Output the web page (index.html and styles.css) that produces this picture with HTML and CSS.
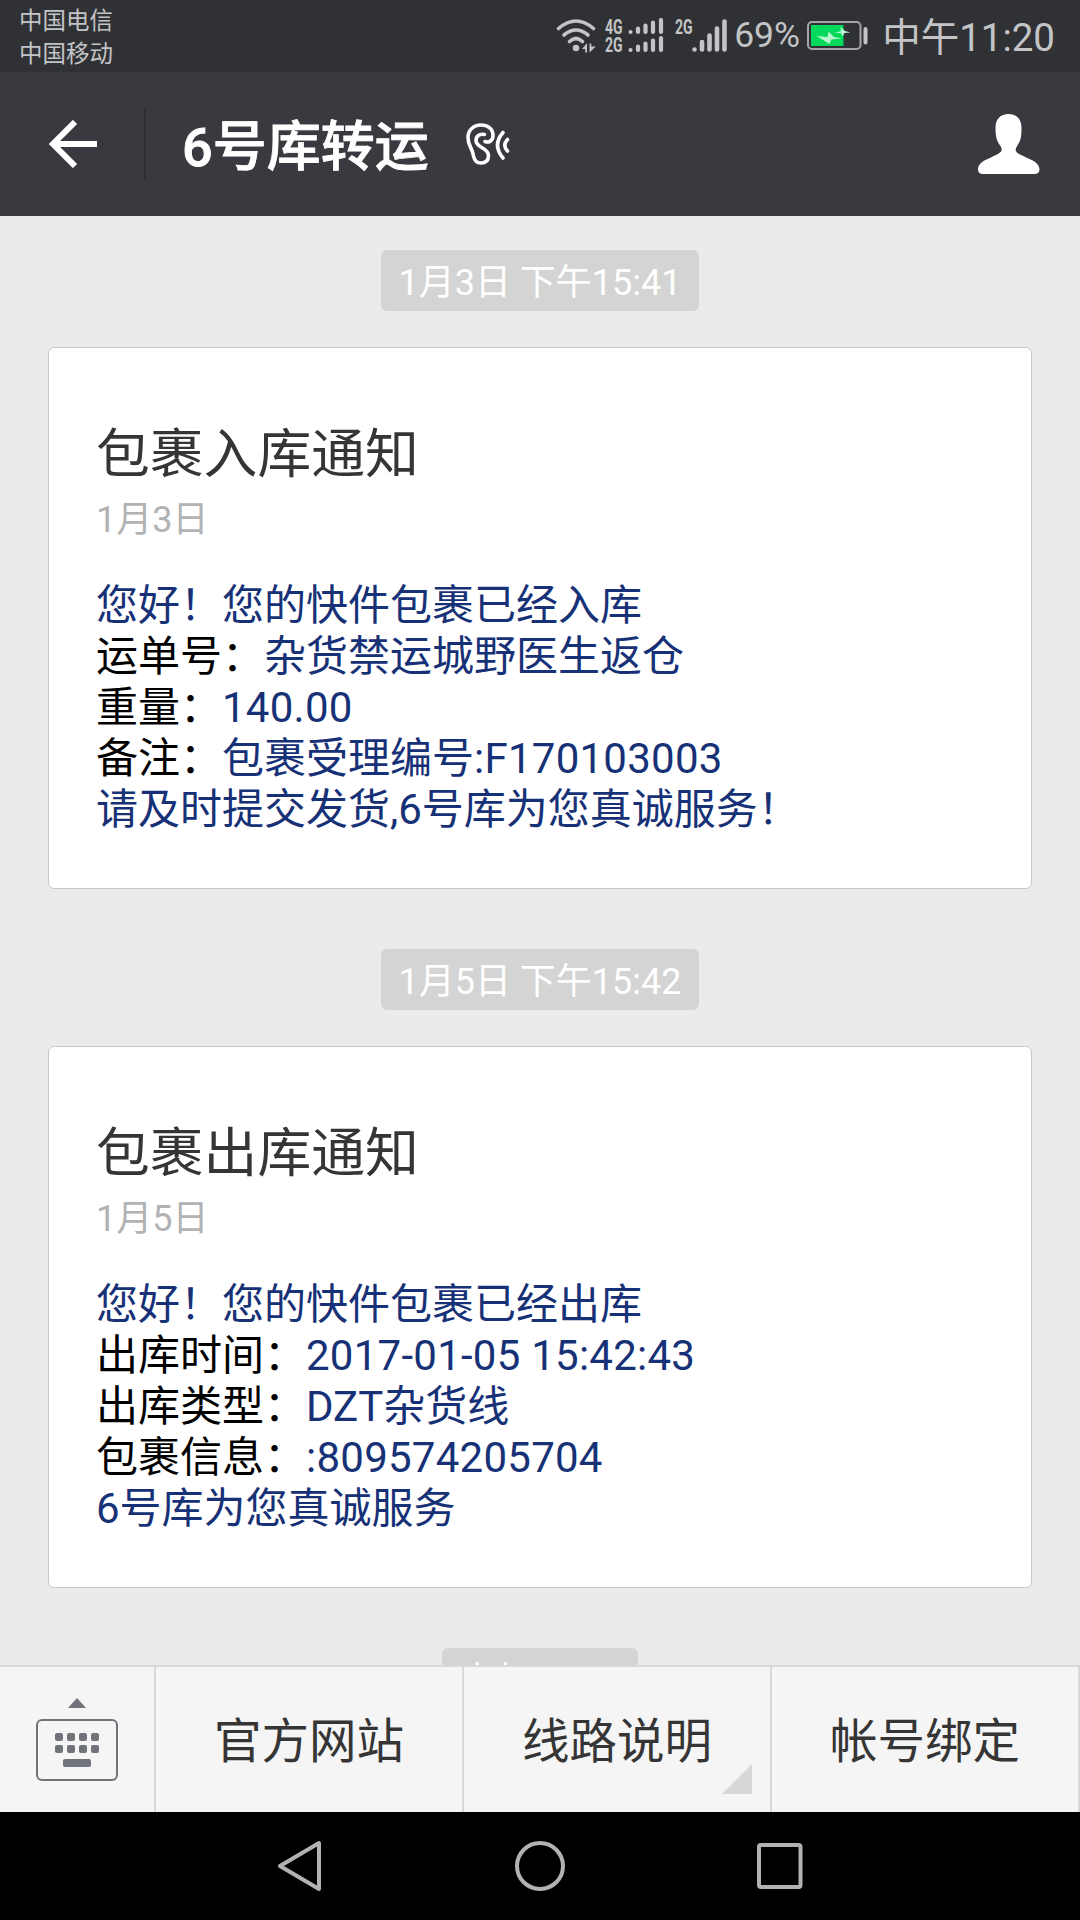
FILE: index.html
```html
<!DOCTYPE html>
<html lang="zh-CN">
<head>
    <meta charset="UTF-8">
    <meta name="viewport" content="width=device-width, initial-scale=1.0">
    <title>6号库转运</title>
    <link rel="stylesheet" href="styles.css">
</head>
<body>
    <div class="status-bar">
        <div class="carriers">
            <span>中国电信</span>
            <span>中国移动</span>
        </div>
        <div class="status-right">
            <svg class="wifi" width="40" height="36" viewBox="0 0 40 36" fill="none" stroke="#c3c4c6" stroke-width="3.6" stroke-linecap="round">
                <path d="M2.5 9.500Q20 -5.500 37.500 9.500"/>
                <path d="M8 16Q20 6 32 16"/>
                <path d="M13.500 22.500Q20 16.500 26.500 22.500"/>
                <circle cx="20" cy="29" r="3.300" fill="#c3c4c6" stroke="none"/>
                <path d="M26 30l5-6v9.500h-1.800v-3.500zM33.500 33.500v-9h1.800v3h4.500z" fill="#c3c4c6" stroke="none"/>
            </svg>
            <div class="net net-double"><span>4G</span><span>2G</span></div>
            <svg class="signal-double" width="36" height="36" viewBox="0 0 36 36" stroke="#c3c4c6" stroke-width="4.200" stroke-linecap="round">
                <path d="M2.500 14v0M10 14v-3.500M17.500 14v-6.500M25 14v-9.500M33 14v-12"/>
                <path d="M2.500 32v0M10 32v-3.500M17.500 32v-6.500M25 32v-9.500M33 32v-12"/>
            </svg>
            <div class="net net-single"><span>2G</span></div>
            <svg class="signal" width="35" height="34" viewBox="0 0 35 34" stroke="#c3c4c6" stroke-width="4.600" stroke-linecap="round">
                <path d="M2.500 30.500v0M10 30.500v-7.500M17.500 30.500v-14M25 30.500v-21M32.500 30.500v-28"/>
            </svg>
            <span class="percent">69%</span>
            <svg class="battery" width="62" height="30" viewBox="0 0 62 30">
                <rect x="1" y="1" width="52.500" height="27" rx="4" fill="none" stroke="#a4a5a7" stroke-width="2"/>
                <rect x="4" y="4" width="32.500" height="21" fill="#00d95a"/>
                <rect x="56.500" y="6" width="4" height="17.500" rx="2" fill="#c3c4c6"/>
                <path d="M9.500 15l11 1 1-5.500 5.500 5.500 8 1.500-10.500 1-2 4.500z" fill="#b6f5cf"/>
                <path d="M27.500 12l6.500-2-.5-4 4.500 4 5.500 1.500-6 .5-2 3.500-1.500-3.500z" fill="#b6f5cf"/>
            </svg>
            <span class="clock">中午11:20</span>
        </div>
    </div>

    <header class="header">
        <svg class="back" width="48" height="48" viewBox="0 0 48 48" fill="none" stroke="#fff" stroke-width="6">
            <path d="M26 2L4 24l22 22M4 24h44"/>
        </svg>
        <div class="divider"></div>
        <h1>6号库转运</h1>
        <svg class="ear" width="44" height="42" viewBox="0 0 44 42" fill="none" stroke="#fff" stroke-width="3.600" stroke-linecap="round">
            <path d="M19 18.500C22.500 20 27 18 27 12.500C27 5.500 21.500 2 15 2C7.500 2 2 7 2 14.500C2 23 6.500 25 7.500 33C8.500 38 11 40 15 40C20 40 22.500 37 22.500 32.500C22.500 24.500 10 25 10 17.500C10 13 13.500 10.500 18.500 11.500"/>
            <path d="M37 9.500Q26 22 37 35M41.500 16.500Q36 22 41.500 28"/>
        </svg>
        <svg class="person" width="62" height="60" viewBox="0 0 62 60" fill="#fff">
            <path d="M30.500 0C22.500 0 17.500 5 17.500 14C17.500 24 19 27 23 33C25 37 22.500 38.500 20 40C12 44.500 0 47 0 55.500C0 58.500 2 60 5 60H56C59.500 60 61.500 58.500 61.500 55.500C61.500 47 49 44.500 41 40C38.500 38.500 36.500 37 38.500 33C42.500 27 43.500 24 43.500 14C43.500 5 38.500 0 30.500 0Z"/>
        </svg>
    </header>

    <main class="messages">
        <div class="time">1月3日 下午15:41</div>
        <section class="card">
            <h2>包裹入库通知</h2>
            <p class="date">1月3日</p>
            <div class="detail">
                <p>您好！您的快件包裹已经入库</p>
                <p><span class="label">运单号：</span>杂货禁运城野医生返仓</p>
                <p><span class="label">重量：</span><span class="num">140.00</span></p>
                <p><span class="label">备注：</span>包裹受理编号<span class="num">:F170103003</span></p>
                <p>请及时提交发货,6号库为您真诚服务！</p>
            </div>
        </section>

        <div class="time">1月5日 下午15:42</div>
        <section class="card">
            <h2>包裹出库通知</h2>
            <p class="date">1月5日</p>
            <div class="detail">
                <p>您好！您的快件包裹已经出库</p>
                <p><span class="label">出库时间：</span><span class="num">2017-01-05 15:42:43</span></p>
                <p><span class="label">出库类型：</span>DZT杂货线</p>
                <p><span class="label">包裹信息：</span><span class="num">:809574205704</span></p>
                <p>6号库为您真诚服务</p>
            </div>
        </section>

        <div class="time">中午11:20</div>
    </main>

    <footer class="menu">
        <div class="keyboard">
            <svg width="82" height="84" viewBox="0 0 82 84" fill="#70747a">
                <path d="M41 0l9 10H32z"/>
                <rect x="1" y="22" width="80" height="60" rx="5" fill="none" stroke="#70747a" stroke-width="2"/>
                <rect x="19" y="35" width="8" height="8" rx="2"/>
                <rect x="31" y="35" width="8" height="8" rx="2"/>
                <rect x="43" y="35" width="8" height="8" rx="2"/>
                <rect x="55" y="35" width="8" height="8" rx="2"/>
                <rect x="19" y="47" width="8" height="8" rx="2"/>
                <rect x="31" y="47" width="8" height="8" rx="2"/>
                <rect x="43" y="47" width="8" height="8" rx="2"/>
                <rect x="55" y="47" width="8" height="8" rx="2"/>
                <rect x="27" y="61" width="28" height="8" rx="2"/>
            </svg>
        </div>
        <div class="menu-item">官方网站</div>
        <div class="menu-item has-sub">线路说明</div>
        <div class="menu-item">帐号绑定</div>
    </footer>

    <nav class="nav-bar">
        <svg width="50" height="54" viewBox="0 0 50 54"><path d="M42 4v46L3 27z"/></svg>
        <svg width="54" height="54" viewBox="0 0 54 54"><circle cx="27" cy="27" r="23"/></svg>
        <svg width="50" height="54" viewBox="0 0 50 54"><rect x="6" y="6" width="41.500" height="42" rx="2"/></svg>
    </nav>
</body>
</html>
```
FILE: styles.css
```css
* {
    box-sizing: border-box;
}

body {
    margin: 0;
    width: 1080px;
    height: 1920px;
    display: flex;
    flex-direction: column;
    overflow: hidden;
    background-color: #ebebeb;
    font-family: Roboto, 'Noto Sans CJK SC', sans-serif;
}

h1, h2, p {
    margin: 0;
    font-weight: 400;
}

svg {
    display: block;
    flex: none;
}

/* status bar */
.status-bar {
    height: 72px;
    flex: none;
    display: flex;
    justify-content: space-between;
    padding: 0 25px 0 19px;
    background-color: #303135;
    color: #c3c4c6;
}

.carriers {
    display: flex;
    flex-direction: column;
    padding-top: 5px;
    font-size: 23.5px;
    line-height: 33px;
}

.status-right {
    display: flex;
    align-items: flex-start;
}

.wifi {
    margin-top: 19px;
}

.net {
    display: flex;
    flex-direction: column;
    font-size: 20px;
    font-weight: 700;
    line-height: 18px;
}

.net span {
    transform: scaleX(0.7);
    transform-origin: left;
}

.net-double {
    width: 19px;
    margin: 18px 4px 0 9px;
}

.signal-double {
    margin-top: 18px;
}

.net-single {
    width: 17px;
    margin: 18px 0 0 11px;
}

.signal {
    margin-top: 19px;
}

.percent {
    width: 66px;
    margin-left: 7px;
    font-size: 35.5px;
    line-height: 70px;
    white-space: nowrap;
}

.battery {
    margin: 21px 13px 0 7px;
}

.clock {
    font-size: 38.5px;
    line-height: 76px;
}

/* title bar */
.header {
    height: 144px;
    flex: none;
    display: flex;
    align-items: center;
    padding: 0 40px 0 49px;
    background-color: #393a3f;
    color: #fff;
}

.divider {
    width: 2px;
    height: 72px;
    margin: 0 36px 0 47px;
    background-color: #2e2f33;
}

.header h1 {
    padding-top: 7px;
    font-size: 54px;
    font-weight: 500;
    line-height: 80px;
    -webkit-text-stroke: 0.8px #fff;
}

.ear {
    margin-left: 37px;
}

.person {
    margin-left: auto;
}

/* messages */
.messages {
    flex: 1;
    min-height: 0;
    overflow: hidden;
    display: flex;
    flex-direction: column;
    align-items: center;
    padding: 34px 48px 0;
}

.time {
    flex: none;
    height: 61px;
    padding: 0 17px;
    border-radius: 6px;
    background-color: #d4d4d4;
    color: #fff;
    font-size: 36px;
    line-height: 67px;
}

.card {
    flex: none;
    width: 100%;
    height: 542px;
    margin: 36px 0 60px;
    padding: 67px 47px 0;
    border: 1px solid #c8c8c8;
    border-radius: 6px;
    background-color: #fff;
}

.card h2 {
    color: #353535;
    font-size: 53.8px;
    line-height: 80px;
}

.date {
    margin-top: -2px;
    color: #b2b2b2;
    font-size: 36px;
    line-height: 54px;
}

.detail {
    margin-top: 33px;
    color: #173177;
    font-size: 42px;
    line-height: 51px;
}

.label {
    color: #000;
}

.num {
    letter-spacing: 0.25px;
}

/* bottom menu */
.menu {
    height: 147px;
    flex: none;
    display: flex;
    border-top: 2px solid #d8d8d8;
    background-color: #f5f5f5;
}

.keyboard {
    width: 156px;
    padding: 31px 0 0 36px;
    border-right: 2px solid #d8d8d8;
}

.menu-item {
    position: relative;
    flex: 1;
    border-right: 2px solid #d8d8d8;
    color: #353535;
    font-size: 47.5px;
    line-height: 151px;
    text-align: center;
}

.has-sub::after {
    content: '';
    position: absolute;
    right: 18px;
    bottom: 18px;
    border-left: 30px solid transparent;
    border-bottom: 30px solid #d8d8d8;
}

/* android navigation */
.nav-bar {
    height: 108px;
    flex: none;
    display: flex;
    justify-content: space-between;
    align-items: center;
    padding: 0 277px;
    background-color: #000;
}

.nav-bar svg {
    fill: none;
    stroke: #b2b2b2;
    stroke-width: 4;
    stroke-linejoin: round;
}
```
